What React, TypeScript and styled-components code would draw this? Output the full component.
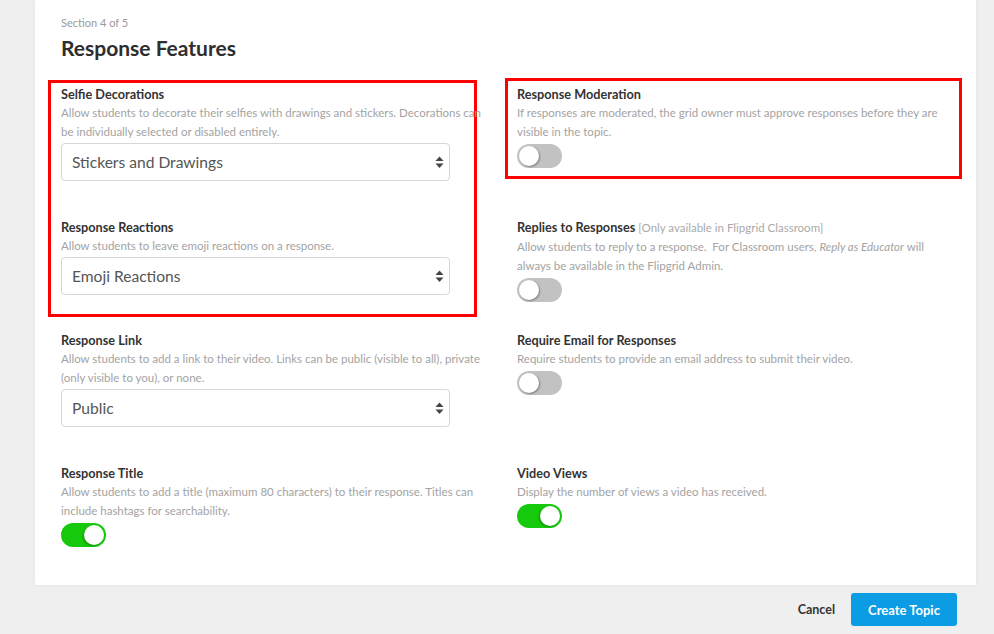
import React from "react";
import styled, { createGlobalStyle, css } from "styled-components";

type Frame = "top" | "bottom" | "all";

const GlobalStyle = createGlobalStyle`
    html, body {
        margin: 0;
        padding: 0;
        background: #efefef;
    }
    body {
        font-family: Lato, "Open Sans", sans-serif;
        color: #333;
    }
`;

function Select({ value }: { value: string }) {
    return (
        <SelectBox>
            <span>{value}</span>
            <svg width="9" height="13" viewBox="0 0 9 13">
                <path d="M4.5 0.5 L8.5 5 L0.5 5 Z" fill="#444" />
                <path d="M0.5 7.5 L8.5 7.5 L4.5 12 Z" fill="#444" />
            </svg>
        </SelectBox>
    );
}

function Toggle({ on }: { on?: boolean }) {
    return (
        <Track $on={on}>
            <Knob $on={on} />
        </Track>
    );
}

export default function App() {
    return (
        <>
            <GlobalStyle />
            <Card>
                <Section>Section 4 of 5</Section>
                <Title>Response Features</Title>

                <Row $flush>
                    <Field $frame="top">
                        <Label>Selfie Decorations</Label>
                        <Desc>
                            Allow students to decorate their selfies with drawings and stickers. Decorations can
                            be individually selected or disabled entirely.
                        </Desc>
                        <Select value="Stickers and Drawings" />
                    </Field>
                    <Field $frame="all">
                        <Label>Response Moderation</Label>
                        <Desc>
                            If responses are moderated, the grid owner must approve responses before they are
                            visible in the topic.
                        </Desc>
                        <Toggle />
                    </Field>
                </Row>

                <Row $flush>
                    <Field $frame="bottom">
                        <Label>Response Reactions</Label>
                        <Desc>Allow students to leave emoji reactions on a response.</Desc>
                        <Select value="Emoji Reactions" />
                    </Field>
                    <Field>
                        <Label>
                            Replies to Responses <Note>[Only available in Flipgrid Classroom]</Note>
                        </Label>
                        <Desc>
                            Allow students to reply to a response.&nbsp; For Classroom users, <em>Reply as Educator</em> will
                            always be available in the Flipgrid Admin.
                        </Desc>
                        <Toggle />
                    </Field>
                </Row>

                <Row>
                    <Field>
                        <Label>Response Link</Label>
                        <Desc>
                            Allow students to add a link to their video. Links can be public (visible to all), private
                            (only visible to you), or none.
                        </Desc>
                        <Select value="Public" />
                    </Field>
                    <Field>
                        <Label>Require Email for Responses</Label>
                        <Desc>Require students to provide an email address to submit their video.</Desc>
                        <Toggle />
                    </Field>
                </Row>

                <Row>
                    <Field>
                        <Label>Response Title</Label>
                        <Desc>
                            Allow students to add a title (maximum 80 characters) to their response. Titles can
                            include hashtags for searchability.
                        </Desc>
                        <Toggle on />
                    </Field>
                    <Field>
                        <Label>Video Views</Label>
                        <Desc>Display the number of views a video has received.</Desc>
                        <Toggle on />
                    </Field>
                </Row>
            </Card>
            <Footer>
                <Cancel>Cancel</Cancel>
                <Primary>Create Topic</Primary>
            </Footer>
        </>
    );
}

const Card = styled.div`
    margin-left: 35px;
    width: 941px;
    box-sizing: border-box;
    padding: 16px 27px 1px 26px;
    background: #fff;
    box-shadow: 0 0 4px rgba(0, 0, 0, 0.06);
`;

const Section = styled.div`
    font-size: 11px;
    line-height: 14px;
    color: #9a9a9a;
`;

const Title = styled.h2`
    margin: 6px 0 25px;
    font-size: 21px;
    line-height: 24px;
    font-weight: 700;
    color: #2e2e2e;
`;

const Row = styled.div<{ $flush?: boolean }>`
    display: grid;
    grid-template-columns: 426px 432px;
    column-gap: 30px;
    align-items: start;
    padding-bottom: ${(p) => (p.$flush ? 0 : 37)}px;
`;

const Label = styled.div`
    font-size: 12.7px;
    line-height: 18px;
    font-weight: 700;
    color: #333;
`;

const Note = styled.span`
    font-size: 11.5px;
    font-weight: 400;
    color: #aaa;
`;

const Desc = styled.div`
    font-size: 11.5px;
    line-height: 19px;
    color: #a3a3a3;
    em {
        font-style: italic;
    }
`;

// the red annotation frames: the left one is drawn narrower than its text
const Field = styled.div<{ $frame?: Frame }>`
    display: flex;
    flex-direction: column;
    align-items: flex-start;
    ${(p) =>
        p.$frame === "top" &&
        css`
            margin: -5px 10px 0 -13px;
            padding: 2px 0 37px 10px;
            border: 3px solid #f00;
            border-bottom: 0;
            ${Desc} {
                margin-right: -13px;
            }
        `}
    ${(p) =>
        p.$frame === "bottom" &&
        css`
            margin: 0 10px 14px -13px;
            padding: 0 0 19px 10px;
            border: 3px solid #f00;
            border-top: 0;
            ${Desc} {
                margin-right: -13px;
            }
        `}
    ${(p) =>
        p.$frame === "all" &&
        css`
            margin: -7px -13px 0 -12px;
            padding: 4px 10px 8px 9px;
            border: 3px solid #f00;
        `}
`;

const SelectBox = styled.div`
    margin-top: 2px;
    width: 389px;
    height: 38px;
    box-sizing: border-box;
    border: 1px solid #d6d6d6;
    border-radius: 4px;
    padding: 0 5px 0 10px;
    display: flex;
    align-items: center;
    justify-content: space-between;
    font-size: 15.6px;
    color: #555;
`;

const Track = styled.div<{ $on?: boolean }>`
    margin-top: 3px;
    width: 45px;
    height: 24px;
    box-sizing: border-box;
    padding: 2px;
    border-radius: 12px;
    background: ${(p) => (p.$on ? "#16c90c" : "#c2c2c2")};
    display: flex;
    justify-content: ${(p) => (p.$on ? "flex-end" : "flex-start")};
`;

const Knob = styled.span<{ $on?: boolean }>`
    width: 20px;
    height: 20px;
    border-radius: 50%;
    background: #fff;
    box-shadow: ${(p) => (p.$on ? "-1px 1px 2px rgba(0, 80, 0, 0.45)" : "1px 1px 2px rgba(0, 0, 0, 0.35)")};
`;

const Footer = styled.div`
    height: 49px;
    display: flex;
    align-items: center;
    justify-content: flex-end;
    gap: 16px;
    padding-right: 37px;
`;

const Cancel = styled.button`
    border: 0;
    background: none;
    padding: 0;
    font-family: inherit;
    font-size: 12.5px;
    font-weight: 700;
    color: #333;
`;

const Primary = styled.button`
    width: 106px;
    height: 33px;
    border: 0;
    border-radius: 3px;
    background: #0c9ce4;
    color: #fff;
    font-family: inherit;
    font-size: 13px;
    font-weight: 700;
`;
